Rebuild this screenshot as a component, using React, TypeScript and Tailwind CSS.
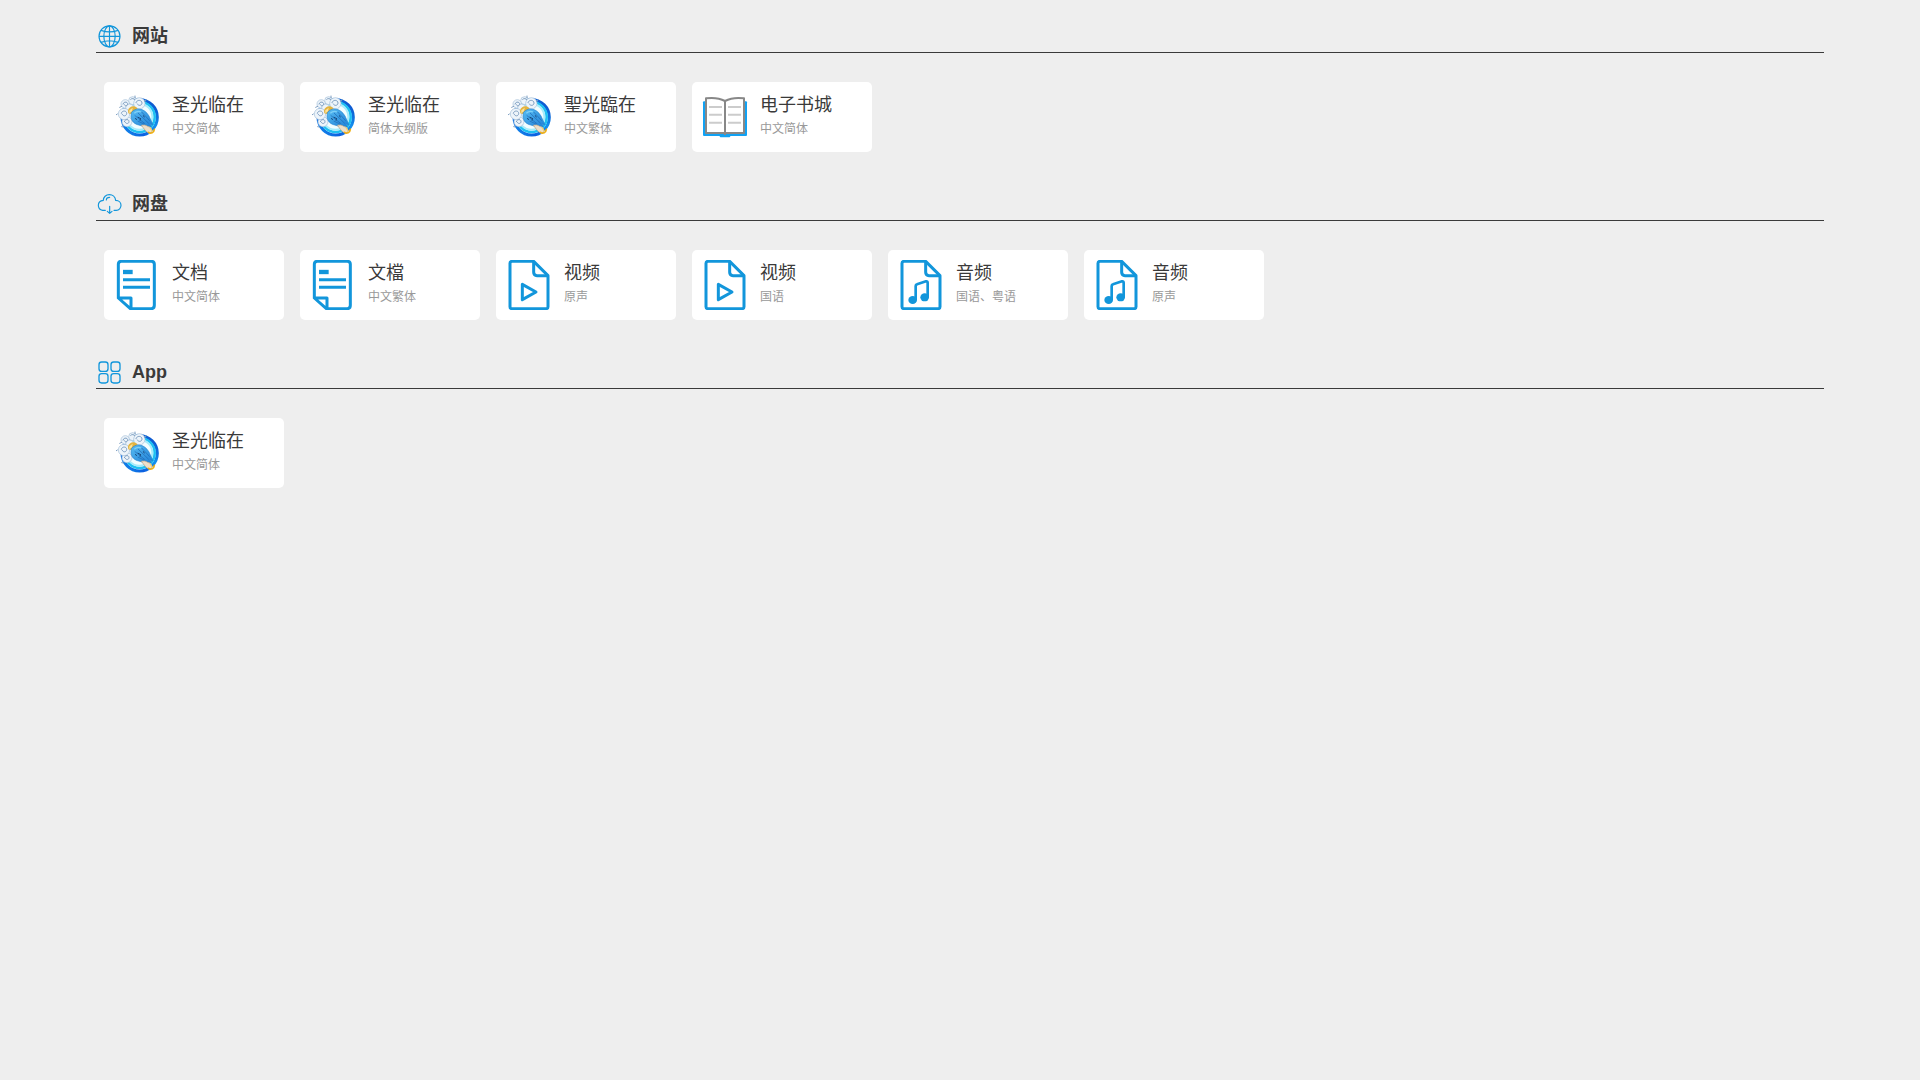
import React from "react"

interface LinkItem {
  title: string
  subtitle: string
  icon: React.ComponentType
}

interface LinkGroup {
  name: string
  icon: React.ComponentType
  items: LinkItem[]
}

const GlobeIcon = () => (
  <svg className="h-7 w-7 shrink-0" viewBox="18 36 84 84" fill="none" stroke="#1296db" strokeWidth="3.5" aria-hidden="true">
    <circle cx="58.5" cy="79" r="31.5" />
    <ellipse cx="58.5" cy="79" rx="17" ry="31.5" />
    <path d="M58.5 47.5v63M27 79h63M33 61c16 6 35 6 51 0M33 97c16-6 35-6 51 0" />
  </svg>
)

const CloudIcon = () => (
  <svg className="h-7 w-7 shrink-0" viewBox="18 15 84 84" fill="none" stroke="#1296db" strokeWidth="3.5" strokeLinecap="round" strokeLinejoin="round" aria-hidden="true">
    <path d="M46 76H38C30 75 25 69 25 61c0-8 6-14 15-15 0-10 8-17 18-17s18 7 19 17c10 0 16 7 16 15s-6 15-14 15h-7" />
    <path d="M49 45c0-5 4-8 10-8" />
    <path d="M59 64v21M52 79l7 6 7-6" />
  </svg>
)

const AppsIcon = () => (
  <svg className="h-7 w-7 shrink-0" viewBox="18 24 84 84" fill="none" stroke="#1296db" strokeWidth="4" aria-hidden="true">
    <rect x="27" y="36" width="27" height="28" rx="8" />
    <rect x="63" y="36" width="27" height="28" rx="8" />
    <rect x="27" y="71" width="27" height="28" rx="8" />
    <rect x="63" y="71" width="27" height="28" rx="8" />
  </svg>
)

const DoveIcon = () => {
  const id = React.useId()
  return (
    <svg className="h-[50px] w-[50px] shrink-0" viewBox="6 12 150 150" fill="none" aria-hidden="true">
      <defs>
        <linearGradient id={`${id}-ring`} x1="0" y1="1" x2="1" y2="0">
          <stop offset="0" stopColor="#1593ee" />
          <stop offset="0.3" stopColor="#0b5fe0" />
          <stop offset="0.6" stopColor="#1391ee" />
          <stop offset="1" stopColor="#0a3fc4" />
        </linearGradient>
        <linearGradient id={`${id}-bird`} x1="0" y1="0" x2="1" y2="1">
          <stop offset="0" stopColor="#58bdf2" />
          <stop offset="1" stopColor="#1f7fd6" />
        </linearGradient>
      </defs>
      <circle cx="89" cy="88" r="53" fill="#f2fdff" stroke={`url(#${id}-ring)`} strokeWidth="9" />
      <circle cx="89" cy="87" r="45" stroke="#1fc0f2" strokeWidth="8" />
      <circle cx="88" cy="86" r="39" stroke="#a5ecfb" strokeWidth="6" />
      {/* clouds */}
      <g fill="#edf4fa" stroke="#a3bed8" strokeWidth="2">
        <circle cx="46" cy="48" r="13" />
        <circle cx="68" cy="38" r="12" />
        <circle cx="88" cy="46" r="17" />
        <circle cx="59" cy="60" r="12" />
        <circle cx="51" cy="101" r="15" />
        <circle cx="42" cy="78" r="17" />
      </g>
      <g stroke="#7f9fc2" strokeWidth="3" strokeLinecap="round">
        <path d="M34 76c1-10 17-9 16 1-1 8-11 9-13 2" />
        <path d="M39 48c2-9 15-7 14 1-1 6-9 6-10 1" />
        <path d="M78 44c2-10 18-9 18 1 0 8-11 10-14 3" />
        <path d="M43 101c1-8 14-9 14 0 0 6-9 8-11 2" />
        <path d="M62 34c4-4 10-3 12 1M104 41l5-6M75 24v6M22 78l-3 2M35 55l-6 3M40 117l-5-1" />
      </g>
      <path d="M54 67c2-8 12-15 22-11l7 5-20 17-8-2z" fill="#e4b33c" />
      <path d="M58 67l10-8-2 11-8 6z" fill="#fbe29a" />
      {/* bird body and wing feathers */}
      <path d="M64 74c6-8 15-12 25-11 12 2 21 9 28 21l12 27-8-2 3 7-13-2-11 1-14-4c-13-3-22-12-23-25z" fill={`url(#${id}-bird)`} stroke="#2583d0" strokeWidth="2" />
      <path d="M74 82l32 26M84 75l32 31M95 72l24 26M83 99l19 9" stroke="#1c66b4" strokeWidth="2" />
      <path d="M83 87l7 4M92 90l-2 8M75 91l6 4M100 82l3 6" stroke="#1b4a7c" strokeWidth="3" />
      <path d="M73 76c6-6 13-7 20-4" stroke="#7fd0f7" strokeWidth="4" />
      <path d="M94 112c7-2 14-1 19 3l8 3 6 12-8 7-11-7z" fill="#eedfc8" stroke="#b89f80" strokeWidth="2" />
      <path d="M116 133c6 5 16 1 17-9" stroke="#efaf14" strokeWidth="5" strokeLinecap="round" />
      <path d="M121 120l6 10" stroke="#f7d173" strokeWidth="4" strokeLinecap="round" />
    </svg>
  )
}

const BookIcon = () => (
  <svg className="h-[50px] w-[50px] shrink-0" viewBox="60 48 150 150" fill="none" aria-hidden="true">
    <rect x="69" y="76" width="132" height="104" rx="3" fill="#11a2f4" />
    <path d="M119 178h32v3q0 3-3 3h-26q-3 0-3-3z" fill="#11a2f4" />
    <path d="M78 67c22-3 42 0 57 8 15-8 35-11 57-8v104H78z" fill="#fff" stroke="#888" strokeWidth="6" strokeLinejoin="round" />
    <path d="M135 74v103" stroke="#888" strokeWidth="6" />
    <path d="M87 93h39M87 116h39M87 140h39M144 93h39M144 116h39M144 140h39" stroke="#ccc" strokeWidth="6" />
  </svg>
)

const DocumentIcon = () => (
  <svg className="h-[50px] w-[50px] shrink-0" viewBox="66 225 150 150" fill="none" stroke="#1296db" strokeWidth="9" strokeLinejoin="round" aria-hidden="true">
    <path d="M85 339V238q0-9 9-9h90q9 0 9 9v123q0 10-9 10h-63L85 339h38v32" />
    <path d="M99 284h81M99 307h81" />
    <path d="M99 261h29" strokeWidth="13" />
  </svg>
)

const VideoIcon = () => (
  <svg className="h-[50px] w-[50px] shrink-0" viewBox="42 45 150 150" fill="none" stroke="#1296db" strokeWidth="9" strokeLinejoin="round" aria-hidden="true">
    <path d="M131 49H66q-6 0-6 6v130q0 6 6 6h102q6 0 6-6V92z" />
    <path d="M131 49v33q0 10 10 10h33" />
    <path d="M97 118l41 23-41 23z" />
  </svg>
)

const MusicIcon = () => (
  <svg className="h-[50px] w-[50px] shrink-0" viewBox="48 45 150 150" fill="none" stroke="#1296db" strokeWidth="9" strokeLinejoin="round" aria-hidden="true">
    <path d="M137 49H72q-6 0-6 6v130q0 6 6 6h102q6 0 6-6V92z" />
    <path d="M137 49v33q0 10 10 10h33" />
    <path d="M107 165v-42q0-4 4-5l27-9q5-1 5 4v44" strokeWidth="8" />
    <ellipse cx="98" cy="165" rx="13" ry="12" fill="#1296db" stroke="none" />
    <ellipse cx="134" cy="157" rx="13" ry="12" fill="#1296db" stroke="none" />
  </svg>
)

const groups: LinkGroup[] = [
  {
    name: "网站",
    icon: GlobeIcon,
    items: [
      { title: "圣光临在", subtitle: "中文简体", icon: DoveIcon },
      { title: "圣光临在", subtitle: "简体大纲版", icon: DoveIcon },
      { title: "聖光臨在", subtitle: "中文繁体", icon: DoveIcon },
      { title: "电子书城", subtitle: "中文简体", icon: BookIcon },
    ],
  },
  {
    name: "网盘",
    icon: CloudIcon,
    items: [
      { title: "文档", subtitle: "中文简体", icon: DocumentIcon },
      { title: "文檔", subtitle: "中文繁体", icon: DocumentIcon },
      { title: "视频", subtitle: "原声", icon: VideoIcon },
      { title: "视频", subtitle: "国语", icon: VideoIcon },
      { title: "音频", subtitle: "国语、粤语", icon: MusicIcon },
      { title: "音频", subtitle: "原声", icon: MusicIcon },
    ],
  },
  {
    name: "App",
    icon: AppsIcon,
    items: [{ title: "圣光临在", subtitle: "中文简体", icon: DoveIcon }],
  },
]

function LinkCard({ item }: { item: LinkItem }) {
  const Icon = item.icon
  return (
    <a href="#" className="flex w-[180px] rounded-[5px] bg-white px-2 py-[10px]">
      <Icon />
      <div className="ml-[10px] min-w-0">
        <div className="truncate text-lg leading-[26px] text-[#3a3a3a]">{item.title}</div>
        <div className="truncate text-xs leading-[22px] text-[#999]">{item.subtitle}</div>
      </div>
    </a>
  )
}

export default function App() {
  return (
    <main className="min-h-screen bg-[#eee] px-[5%] font-['Liberation_Sans','Noto_Sans_CJK_SC',sans-serif]">
      {groups.map((group) => {
        const Icon = group.icon
        return (
          <section key={group.name} className="pt-5 pb-4">
            <div className="flex h-[33px] items-center gap-2 border-b border-[#3a3a3a]">
              <Icon />
              <h2 className="text-lg leading-6 font-bold text-[#3a3a3a]">{group.name}</h2>
            </div>
            <div className="mt-[29px] flex flex-wrap gap-4 px-2">
              {group.items.map((item, index) => (
                <LinkCard key={index} item={item} />
              ))}
            </div>
          </section>
        )
      })}
    </main>
  )
}
